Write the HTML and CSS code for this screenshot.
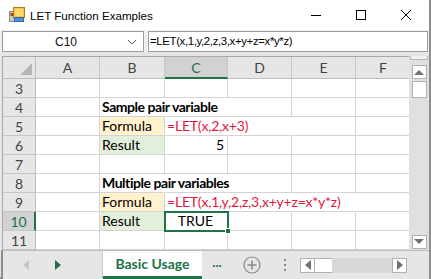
FILE: index.html
```html
<!DOCTYPE html>
<html lang="en">
<head>
    <meta charset="UTF-8">
    <title>LET Function Examples</title>
    <link rel="stylesheet" href="styles.css">
</head>
<body>

<div class="window">
    <div class="titlebar">
        <svg class="app-icon" width="16" height="16" viewBox="0 0 16 16">
            <rect x="0.5" y="4.5" width="5" height="10" fill="#c8c8c8" stroke="#8a8a8a"/>
            <rect x="1.5" y="6" width="3" height="3" fill="#c0392b"/>
            <rect x="4.5" y="0.5" width="11" height="10" fill="#f5c242" stroke="#b07d12"/>
            <rect x="6" y="2" width="8" height="7" fill="#fbd96a"/>
            <rect x="5.5" y="10.5" width="9" height="4" fill="#4f8fd6" stroke="#2e6ab3"/>
        </svg>
        <span class="title">LET Function Examples</span>
        <div class="controls">
            <span class="ctl"><svg width="12" height="12" viewBox="0 0 12 12"><path d="M1 6.5h10" stroke="#000" stroke-width="1"/></svg></span>
            <span class="ctl"><svg width="12" height="12" viewBox="0 0 12 12"><rect x="1.5" y="1.5" width="9" height="9" fill="none" stroke="#000"/></svg></span>
            <span class="ctl"><svg width="12" height="12" viewBox="0 0 12 12"><path d="M1 1l10 10M11 1L1 11" stroke="#000" stroke-width="1"/></svg></span>
        </div>
    </div>

    <div class="formulabar">
        <div class="namebox">
            <span class="ref">C10</span>
            <svg class="chev" width="10" height="6" viewBox="0 0 10 6"><path d="M1 1l4 4 4-4" fill="none" stroke="#555"/></svg>
        </div>
        <div class="fx">=LET(x,1,y,2,z,3,x+y+z=x*y*z)</div>
    </div>

    <div class="workarea">
        <div class="sheet">
            <div class="corner"><svg width="12" height="12" viewBox="0 0 12 12"><path d="M12 0V12H0z" fill="#b4b4b4"/></svg></div>
            <div class="colhdr">A</div>
            <div class="colhdr">B</div>
            <div class="colhdr sel">C</div>
            <div class="colhdr">D</div>
            <div class="colhdr">E</div>
            <div class="colhdr">F</div>

            <div class="rowhdr">3</div>
            <div class="cell"></div><div class="cell"></div><div class="cell"></div><div class="cell"></div><div class="cell"></div><div class="cell"></div>

            <div class="rowhdr">4</div>
            <div class="cell"></div>
            <div class="cell heading">Sample pair variable</div>
            <div class="cell covered"></div><div class="cell"></div><div class="cell"></div><div class="cell"></div>

            <div class="rowhdr">5</div>
            <div class="cell"></div>
            <div class="cell label orange">Formula</div>
            <div class="cell formula">=LET(x,2,x+3)</div>
            <div class="cell covered"></div><div class="cell"></div><div class="cell"></div>

            <div class="rowhdr">6</div>
            <div class="cell"></div>
            <div class="cell label green">Result</div>
            <div class="cell num">5</div>
            <div class="cell"></div><div class="cell"></div><div class="cell"></div>

            <div class="rowhdr">7</div>
            <div class="cell"></div><div class="cell"></div><div class="cell"></div><div class="cell"></div><div class="cell"></div><div class="cell"></div>

            <div class="rowhdr">8</div>
            <div class="cell"></div>
            <div class="cell heading">Multiple pair variables</div>
            <div class="cell covered"></div><div class="cell"></div><div class="cell"></div><div class="cell"></div>

            <div class="rowhdr">9</div>
            <div class="cell"></div>
            <div class="cell label orange">Formula</div>
            <div class="cell formula">=LET(x,1,y,2,z,3,x+y+z=x*y*z)</div>
            <div class="cell covered"></div><div class="cell covered"></div><div class="cell"></div>

            <div class="rowhdr sel">10</div>
            <div class="cell"></div>
            <div class="cell label green">Result</div>
            <div class="cell active">TRUE<span class="handle"></span></div>
            <div class="cell"></div><div class="cell"></div><div class="cell"></div>

            <div class="rowhdr">11</div>
            <div class="cell"></div><div class="cell"></div><div class="cell"></div><div class="cell"></div><div class="cell"></div><div class="cell"></div>
        </div>

        <div class="vscroll">
            <div class="split"></div>
            <div class="sbtn"><svg width="10" height="6" viewBox="0 0 10 6"><path d="M0 6L5 1 10 6z" fill="#707070"/></svg></div>
            <div class="vthumb"></div>
            <div class="vtrack"></div>
            <div class="sbtn"><svg width="10" height="6" viewBox="0 0 10 6"><path d="M0 0L5 5 10 0z" fill="#707070"/></svg></div>
        </div>
    </div>

    <div class="tabbar">
        <div class="nav">
            <svg width="6" height="10" viewBox="0 0 6 10"><path d="M6 0V10L0 5z" fill="#c4c4c4"/></svg>
            <svg width="6" height="10" viewBox="0 0 6 10"><path d="M0 0V10L6 5z" fill="#217346"/></svg>
        </div>
        <div class="tab">Basic Usage</div>
        <div class="more">...</div>
        <svg class="addsheet" width="18" height="18" viewBox="0 0 18 18">
            <circle cx="9" cy="9" r="8" fill="none" stroke="#8a8a8a" stroke-width="1.2"/>
            <path d="M9 4.5v9M4.5 9h9" stroke="#8a8a8a" stroke-width="1.6"/>
        </svg>
        <div class="grip"><span></span><span></span><span></span></div>
        <div class="hscroll">
            <div class="hbtn"><svg width="6" height="10" viewBox="0 0 6 10"><path d="M6 0V10L0 5z" fill="#707070"/></svg></div>
            <div class="hthumb"></div>
            <div class="htrack"></div>
            <div class="hbtn"><svg width="6" height="10" viewBox="0 0 6 10"><path d="M0 0V10L6 5z" fill="#707070"/></svg></div>
        </div>
    </div>
</div>

</body>
</html>
```

FILE: styles.css
```css
* { margin: 0; padding: 0; box-sizing: border-box; }
body { width: 431px; height: 279px; overflow: hidden; background: #fff; font-family: 'Lato', 'Liberation Sans', sans-serif; }

.window {
    width: 431px; height: 279px;
    background: #e6e6e6;
    border-right: 2px solid #8c8c8c;
    border-bottom: 2px solid #8c8c8c;
    display: flex; flex-direction: column;
}

/* title bar */
.titlebar {
    height: 30px; background: #fff;
    display: flex; align-items: center;
    padding-left: 9px;
}
.app-icon { margin-right: 5px; }
.title { font-family: 'Liberation Sans', sans-serif; font-size: 11.6px; color: #000; }
.controls { margin-left: auto; display: flex; height: 30px; }
.ctl { width: 45px; display: flex; align-items: center; justify-content: center; }
.ctl:last-child { width: 46px; }

/* formula bar */
.formulabar {
    height: 22px; display: flex; gap: 4px;
    padding: 1px 1px 0 2px;
    background: #f0f0f0;
}
.namebox {
    width: 142px; height: 21px;
    background: #fff; border: 1px solid #9c9c9c;
    display: flex; align-items: center; position: relative;
}
.namebox .ref {
    flex: 1; text-align: center;
    font-family: 'Liberation Sans', sans-serif; font-size: 12px; color: #111;
    padding-left: 2px;
}
.namebox .chev { margin-right: 6px; }
.fx {
    flex: 1; height: 21px;
    background: #fff; border: 1px solid #9c9c9c;
    font-family: 'Liberation Sans', sans-serif; font-size: 11.4px; letter-spacing: -0.35px;
    color: #000; line-height: 19px; padding-left: 1px;
}

/* sheet */
.workarea {
    display: flex; padding-top: 4px;
    height: 200px;
}
.sheet {
    display: grid;
    grid-template-columns: 33px 64px 65px 63px 64px 64px 55px;
    grid-template-rows: 22px repeat(9, 19px);
    background: #fff;
    border-top: 1px solid #a8a8a8;
    border-left: 1px solid #a8a8a8;
    width: 408px;
    margin-left: 2px;
    overflow: hidden;
    font-size: 14px;
}
.corner {
    background: #e6e6e6; border-right: 1px solid #bdbdbd; border-bottom: 1px solid #bdbdbd;
    display: flex; align-items: flex-end; justify-content: flex-end; padding: 0 3px 3px 0;
}
.colhdr {
    background: #e6e6e6; color: #444;
    border-right: 1px solid #c6c6c6; border-bottom: 1px solid #bdbdbd;
    text-align: center; line-height: 22px; font-size: 14px;
}
.colhdr.sel { background: #d2d2d2; color: #217346; border-bottom: 2px solid #217346; }
.rowhdr {
    background: #e6e6e6; color: #444;
    border-right: 1px solid #bdbdbd; border-bottom: 1px solid #c6c6c6;
    text-align: center; line-height: 19px; font-size: 14px;
}
.rowhdr.sel { background: #d2d2d2; color: #217346; border-right: 2px solid #217346; }

.cell {
    border-right: 1px solid #d4d4d4; border-bottom: 1px solid #d4d4d4;
    line-height: 18px; padding: 0 3px 0 2px; white-space: nowrap;
    color: #000; position: relative;
}
.heading { font-weight: bold; letter-spacing: -0.45px; overflow: visible; z-index: 1; border-right-color: transparent; }
.covered { border-right-color: transparent; }
.label.orange { background: #fff2cc; }
.label.green { background: #e2efda; }
.formula { color: #e3173e; letter-spacing: -0.2px; overflow: visible; z-index: 1; border-right-color: transparent; }
.num { text-align: right; }
.active {
    text-align: center;
    outline: 2px solid #217346; outline-offset: -1px;
    z-index: 2;
}
.handle {
    position: absolute; right: -4px; bottom: -4px;
    width: 6px; height: 6px; background: #217346; border: 1px solid #fff;
}

/* vertical scrollbar */
.vscroll {
    width: 20px; display: flex; flex-direction: column; align-items: center;
    background: #e0e0e0;
}
.split { width: 18px; height: 4px; background: #f0f0f0; border: 1px solid #b8b8b8; border-top: none; margin-bottom: 5px; }
.sbtn {
    width: 15px; height: 14px; background: #fff; border: 1px solid #b0b0b0;
    display: flex; align-items: center; justify-content: center;
}
.vthumb { width: 15px; height: 17px; background: #fff; border: 1px solid #b0b0b0; margin-top: 2px; }
.vtrack { flex: 1; }
.vscroll .sbtn:last-child { margin-bottom: 1px; }

/* tab bar */
.tabbar {
    flex: 1; display: flex; align-items: stretch;
    border-left: 2px solid #8c8c8c;
    border-top: 1px solid #bdbdbd;
    margin-left: 1px;
    background: #e6e6e6;
}
.nav {
    width: 100px; display: flex; align-items: center; gap: 26px;
    padding-left: 20px;
    border-right: 1px solid #c8c8c8;
}
.tab {
    width: 99px; background: #fff;
    border-bottom: 3px solid #217346;
    color: #217346; font-weight: bold; font-size: 14px;
    text-align: center; line-height: 25px;
}
.more { width: 30px; color: #217346; font-weight: bold; font-size: 13px; text-align: center; line-height: 22px; }
.addsheet { align-self: center; margin-left: 11px; }
.grip { width: 30px; margin-left: 9px; display: flex; flex-direction: column; align-items: center; justify-content: center; gap: 3px; }
.grip span { width: 2px; height: 2px; background: #8a8a8a; }
.hscroll {
    width: 107px; height: 15px; align-self: center;
    display: flex; background: #d8d8d8;
}
.hbtn {
    width: 15px; height: 15px; background: #fff; border: 1px solid #b0b0b0;
    display: flex; align-items: center; justify-content: center;
}
.hthumb { width: 17px; background: #fff; border-top: 1px solid #b0b0b0; border-bottom: 1px solid #b0b0b0; }
.htrack { flex: 1; }
```
